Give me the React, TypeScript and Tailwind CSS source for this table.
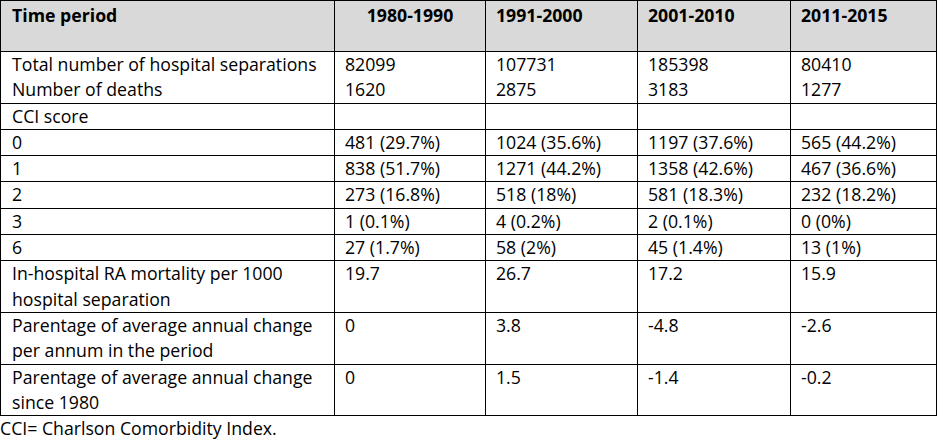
import React from 'react';

const periods = ['1980-1990', '1991-2000', '2001-2010', '2011-2015'];

const rows: { label: React.ReactNode; values: React.ReactNode[] }[] = [
  {
    label: (
      <>
        Total number of hospital separations
        <br />
        Number of deaths
      </>
    ),
    values: [
      <>82099<br />1620</>,
      <>107731<br />2875</>,
      <>185398<br />3183</>,
      <>80410<br />1277</>,
    ],
  },
  { label: 'CCI score', values: ['', '', '', ''] },
  { label: '0', values: ['481 (29.7%)', '1024 (35.6%)', '1197 (37.6%)', '565 (44.2%)'] },
  { label: '1', values: ['838 (51.7%)', '1271 (44.2%)', '1358 (42.6%)', '467 (36.6%)'] },
  { label: '2', values: ['273 (16.8%)', '518 (18%)', '581 (18.3%)', '232 (18.2%)'] },
  { label: '3', values: ['1 (0.1%)', '4 (0.2%)', '2 (0.1%)', '0 (0%)'] },
  { label: '6', values: ['27 (1.7%)', '58 (2%)', '45 (1.4%)', '13 (1%)'] },
  {
    label: (
      <>
        In-hospital RA mortality per 1000
        <br />
        hospital separation
      </>
    ),
    values: ['19.7', '26.7', '17.2', '15.9'],
  },
  {
    label: (
      <>
        Parentage of average annual change
        <br />
        per annum in the period
      </>
    ),
    values: ['0', '3.8', '-4.8', '-2.6'],
  },
  {
    label: (
      <>
        Parentage of average annual change
        <br />
        since 1980
      </>
    ),
    values: ['0', '1.5', '-1.4', '-0.2'],
  },
];

export default function App() {
  return (
    <div className="bg-white min-h-screen text-black font-['Open_Sans',sans-serif] text-[17.7px] leading-[25.3px]">
      <table className="w-[936px] table-fixed border-collapse border border-black">
        <colgroup>
          <col className="w-[334px]" />
          <col className="w-[151px]" />
          <col className="w-[152px]" />
          <col className="w-[153px]" />
          <col className="w-[146px]" />
        </colgroup>
        <thead>
          <tr className="bg-[#d9d9d9] h-[51px]">
            <th className="border border-black align-top text-left font-bold pl-[11px] pt-[2px]">
              Time period
            </th>
            {periods.map((p, i) => (
              <th
                key={p}
                className={
                  i === 0
                    ? 'border border-black align-top text-center font-bold pt-[2px]'
                    : 'border border-black align-top text-left font-bold pl-[10px] pt-[2px]'
                }
              >
                {p}
              </th>
            ))}
          </tr>
        </thead>
        <tbody>
          {rows.map((row, r) => (
            <tr key={r}>
              <td className="border border-black align-top pl-[11px] whitespace-nowrap">
                {row.label}
              </td>
              {row.values.map((v, i) => (
                <td key={i} className="border border-black align-top pl-[10px] whitespace-nowrap">
                  {v}
                </td>
              ))}
            </tr>
          ))}
        </tbody>
      </table>
      <p>CCI= Charlson Comorbidity Index.</p>
    </div>
  );
}
